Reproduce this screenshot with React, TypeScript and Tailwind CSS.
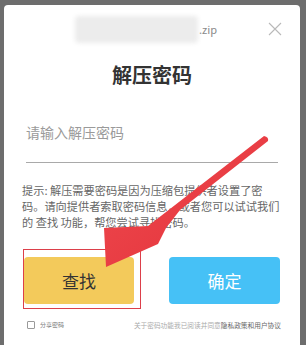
const font = { fontFamily: '"Noto Sans CJK SC", "Noto Sans", sans-serif' };

const App = () => {
  return (
    <div className="relative h-[345px] w-[306px] overflow-hidden bg-[#6d6d6d] pl-[4px] pt-[5px]" style={font}>
      <div className="relative h-[345px] w-[296px] rounded-t-[4px] bg-white">
        {/* file name row */}
        <div className="flex h-[38px] items-end pl-[71px]">
          <div className="flex items-center">
            <div className="h-[27px] w-[123px] rounded-sm bg-[#ececec] blur-[2px]" />
            <span className="ml-[1px] text-[11px] text-[#8a8a8a]">.zip</span>
          </div>
        </div>
        <button className="absolute right-[18px] top-[17px] h-[14px] w-[14px]">
          <svg viewBox="0 0 14 14" className="h-[14px] w-[14px]">
            <path d="M1 1 L13 13 M13 1 L1 13" stroke="#b9b9b9" strokeWidth="1.1" fill="none" />
          </svg>
        </button>

        {/* title */}
        <h2 className="mt-[18px] text-center text-[20px] font-bold leading-[28px] text-[#333]">解压密码</h2>

        {/* input */}
        <div className="mx-[22px] mt-[33px] border-b border-[#a9a9a9] pb-[20px]">
          <div className="text-[14px] leading-[20px] text-[#9a9a9a]">请输入解压密码</div>
        </div>

        {/* hint */}
        <div className="mt-[19px] px-[18px] text-[11.2px] leading-[16px] text-[#666]">
          <div className="whitespace-nowrap">提示: 解压需要密码是因为压缩包提供者设置了密</div>
          <div className="whitespace-nowrap">码。请向提供者索取密码信息，或者您可以试试我们</div>
          <div className="whitespace-nowrap">的 查找 功能，帮您尝试寻找密码。</div>
        </div>

        {/* buttons */}
        <div className="relative mt-[27px] flex justify-between px-[20px]">
          <button className="flex h-[47px] w-[110px] items-center justify-center rounded-[4px] bg-[#f3ca5b] text-[17px] text-[#333]">
            查找
          </button>
          <button className="flex h-[47px] w-[111px] items-center justify-center rounded-[4px] bg-[#46c1f6] text-[17px] text-white">
            确定
          </button>
          <div className="pointer-events-none absolute left-[19px] top-[-8px] h-[60px] w-[118px] border-[1.5px] border-[#dc3f4a]" />
        </div>

        {/* footer */}
        <div className="mt-[16px] flex items-center justify-between pl-[23px] pr-[19px]">
          <div className="flex items-center gap-[5px]">
            <span className="h-[8px] w-[8px] rounded-[1px] border border-[#9a9a9a]" />
            <span className="text-[6px] leading-[10px] text-[#777]">分享密码</span>
          </div>
          <div className="whitespace-nowrap text-[6.7px] leading-[10px] text-[#aaa]">
            关于密码功能我已阅读并同意<span className="text-[#666]">隐私政策和用户协议</span>
          </div>
        </div>
      </div>

      {/* red annotation arrow */}
      <svg className="pointer-events-none absolute left-0 top-0" width="306" height="345" viewBox="0 0 306 345">
        <defs>
          <linearGradient id="ag" x1="0" y1="0" x2="1" y2="1">
            <stop offset="0" stopColor="#ef4a4f" />
            <stop offset="1" stopColor="#e3323a" />
          </linearGradient>
        </defs>
        <path
          d="M264 136 Q269 137 268 141 L180 210 L166 228 L158 244 L106 267 L104 228 L148 226 Z"
          fill="url(#ag)"
        />
      </svg>
    </div>
  );
};

export default App;
